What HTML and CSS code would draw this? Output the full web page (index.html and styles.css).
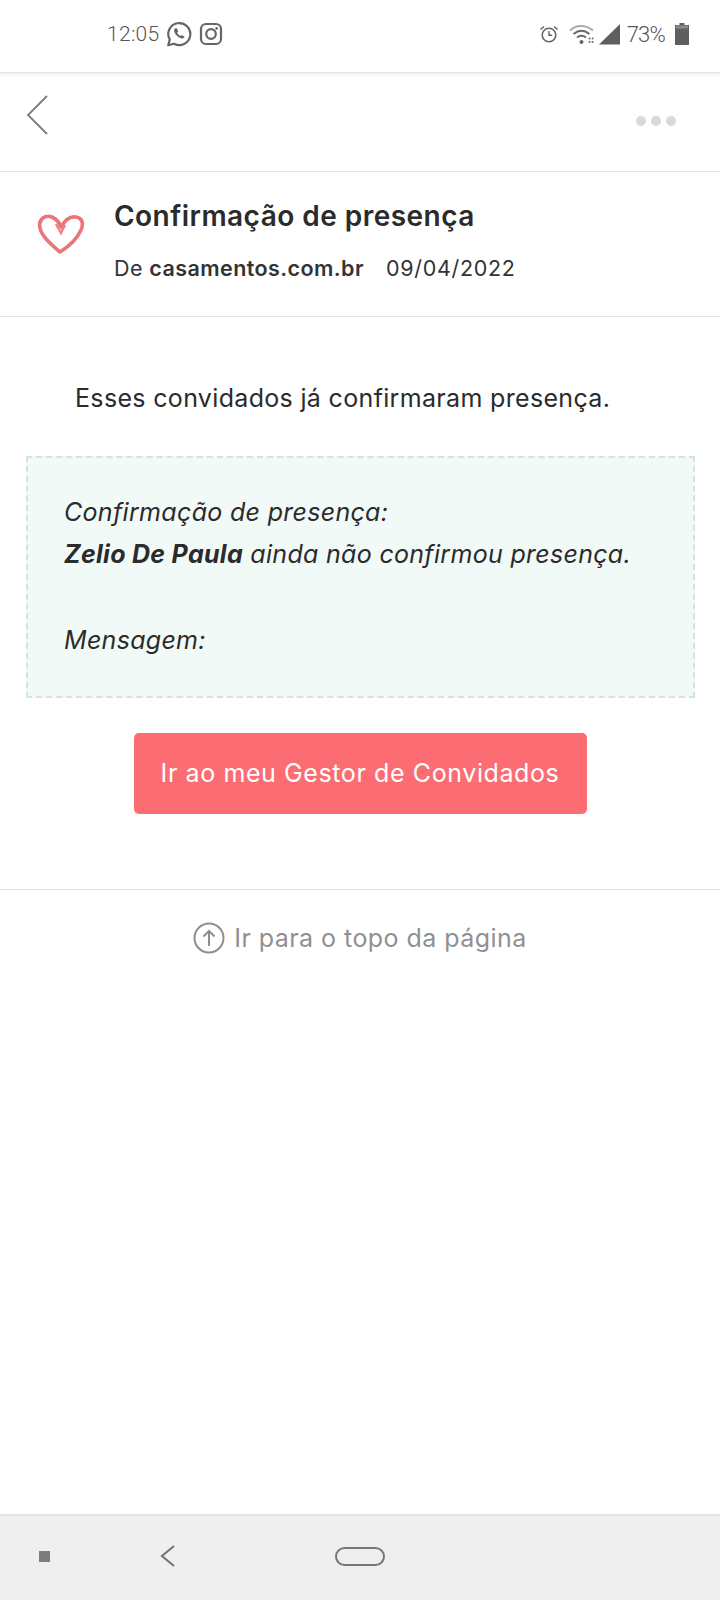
FILE: index.html
```html
<!DOCTYPE html>
<html lang="pt-BR">
<head>
<meta charset="utf-8">
<title>Confirmação de presença</title>
<link rel="stylesheet" href="styles.css">
</head>
<body>
<div class="phone">
  <header class="status">
    <div class="status-left">
      <span class="time">12:05</span>
      <svg class="ic-wa" viewBox="0 0 26 26" width="26" height="26"><path d="M2.200 24.200l1.600-5.600A11 11 0 1 1 8 22.700z" fill="none" stroke="#666" stroke-width="2.200" stroke-linejoin="round"/><path d="M9.200 7.200c-1.300 1-1.500 2.800-.4 4.800 1.300 2.400 3.200 4.200 5.600 5.100 1.800.7 3.400.2 4.200-1.200l-2.800-2-1.300 1.100c-1.300-.6-2.600-1.900-3.300-3.300l1.100-1.300-1.500-3.200z" fill="#666"/></svg>
      <svg class="ic-ig" viewBox="0 0 24 24" width="24" height="24"><rect x="2" y="2" width="20" height="20" rx="5" fill="none" stroke="#666" stroke-width="2.200"/><circle cx="12" cy="12" r="4.800" fill="none" stroke="#666" stroke-width="2.200"/><circle cx="17.600" cy="6.400" r="1.300" fill="#666"/></svg>
    </div>
    <div class="status-right">
      <svg viewBox="0 0 20 20" width="20" height="20"><circle cx="10" cy="11" r="6.800" fill="none" stroke="#666" stroke-width="1.600"/><path d="M10 7v4.300h3.200" fill="none" stroke="#666" stroke-width="1.400"/><path d="M1.500 5.500l3.500-3M18.500 5.500l-3.500-3" stroke="#666" stroke-width="1.600"/></svg>
      <svg class="ic-wifi" viewBox="0 0 26 22" width="26" height="22"><path d="M1 7.500C7 1.500 17 1.500 24 7.500" fill="none" stroke="#aaa" stroke-width="1.800"/><path d="M4.500 11c5-4 11-4 16 0" fill="none" stroke="#666" stroke-width="2"/><path d="M8 14.500c3-2.300 6-2.300 9 0" fill="none" stroke="#666" stroke-width="2"/><circle cx="12.500" cy="19" r="2" fill="#666"/><circle cx="20.500" cy="15.500" r="1" fill="#666"/><circle cx="23.500" cy="15.500" r="1" fill="#666"/><circle cx="20.500" cy="19" r="1" fill="#666"/><circle cx="23.500" cy="19" r="1" fill="#666"/></svg>
      <svg class="ic-signal" viewBox="0 0 21 21" width="21" height="21"><path d="M0 20.500L21 0v20.500z" fill="#5f5f5f"/></svg>
      <span class="pct">73%</span>
      <svg class="ic-batt" viewBox="0 0 14 22" width="14" height="22"><path d="M4.500 0h5v2h4.500v20H0V2h4.500z" fill="#5f5f5f"/><path d="M1 2.500h12v3H1z" fill="#8a8a8a"/></svg>
    </div>
  </header>
  <nav class="topbar">
    <svg class="back" viewBox="0 0 24 42" width="24" height="42"><path d="M22 2L3 21l19 19" fill="none" stroke="#7b7b7b" stroke-width="1.800"/></svg>
    <div class="dots"><i></i><i></i><i></i></div>
  </nav>
  <section class="head">
    <svg class="heart" viewBox="0 0 50 44" width="50" height="44"><path d="M24 15C20 5 11 2 6 6 1 10 2 17 6 23c4 6 11 12 17 17 8-5 17-13 21-22 3-7 1-12-5-13-6-1-11 3-15 10z" fill="none" stroke="#ea7478" stroke-width="3.600" stroke-linejoin="round"/><path d="M19 12l5 9 4-8" fill="none" stroke="#ee7f82" stroke-width="2.400"/></svg>
    <div class="head-text">
      <h1>Confirmação de presença</h1>
      <p class="meta"><span>De <b>casamentos.com.br</b></span><span class="date">09/04/2022</span></p>
    </div>
  </section>
  <main class="content">
    <p class="intro">Esses convidados já confirmaram presença.</p>
    <div class="note">
      <p>Confirmação de presença:</p>
      <p><b>Zelio De Paula</b> ainda não confirmou presença.</p>
      <p class="msg">Mensagem:</p>
    </div>
    <a class="cta">Ir ao meu Gestor de Convidados</a>
  </main>
  <footer class="totop">
    <svg viewBox="0 0 32 32" width="32" height="32"><circle cx="16" cy="16" r="14.500" fill="none" stroke="#8e8e8e" stroke-width="2"/><path d="M16 24V9M10.500 14.500L16 9l5.500 5.500" fill="none" stroke="#8e8e8e" stroke-width="2"/></svg>
    <span>Ir para o topo da página</span>
  </footer>
  <div class="navbar">
    <i class="square"></i>
    <svg class="nav-back" viewBox="0 0 18 24" width="18" height="24"><path d="M15 2L3 12l12 10" fill="none" stroke="#777" stroke-width="2.200"/></svg>
    <i class="pill"></i>
  </div>
</div>
</body>
</html>
```
FILE: styles.css
```css
* { box-sizing: border-box; }
html, body { margin: 0; padding: 0; }
body { background: #fff; font-family: "Inter", "Liberation Sans", sans-serif; color: #2b2b2b; }
.phone { width: 720px; height: 1600px; display: flex; flex-direction: column; overflow: hidden; }
.status { height: 73px; flex: none; display: flex; justify-content: space-between; align-items: center; padding: 0 31px 4px 107px; border-bottom: 1px solid #e6e6e6; box-shadow: 0 2px 3px rgba(0,0,0,.06); }
.status-left, .status-right { display: flex; align-items: center; }
.time { font: 300 21px "Roboto", sans-serif; color: #555; margin-right: 6px; letter-spacing: .3px; }
.ic-ig { margin-left: 7px; }
.status-right svg { flex: none; }
.ic-wifi { margin-left: 10px; }
.ic-signal { margin-left: 4px; }
.pct { font: 300 22px "Roboto", sans-serif; color: #555; margin: 0 10px 0 7px; letter-spacing: -.8px; }
.topbar { height: 99px; flex: none; display: flex; justify-content: space-between; align-items: center; padding: 0 44px 3px 25px; border-bottom: 1px solid #e3e3e3; }
.back { margin-top: -12px; }
.dots { display: flex; gap: 5px; }
.dots i { width: 10px; height: 10px; border-radius: 50%; background: #d9d9d9; }
.head { height: 145px; flex: none; display: flex; padding: 0 0 0 37px; border-bottom: 1px solid #e3e3e3; }
.heart { flex: none; margin-top: 40px; }
.head-text { margin-left: 27px; padding-top: 25px; }
h1 { margin: 0; font-size: 28px; line-height: 38px; font-weight: 600; letter-spacing: .47px; color: #2b2b2b; }
.meta { margin: 19px 0 0; font-size: 21.500px; line-height: 28px; display: flex; gap: 22px; color: #333; letter-spacing: .42px; }
.meta b { font-weight: 600; }
.date { letter-spacing: .7px; }
.content { flex: none; display: flex; flex-direction: column; align-items: center; height: 573px; border-bottom: 1px solid #e3e3e3; padding: 0 25px; }
.intro { margin: 63px 0 0; font-size: 25px; line-height: 36px; letter-spacing: .33px; width: 100%; padding-left: 50px; }
.note { margin-top: 40px; width: 669px; height: 242px; margin-left: 1px; background: #f2faf8; border: 2px dashed #d6e4e0; padding: 33px 36px 0; font-size: 25px; line-height: 42px; letter-spacing: .3px; font-style: italic; }
.note p { margin: 0; }
.note .msg { margin-top: 44px; }
.cta { margin-top: 35px; width: 453px; height: 81px; padding-bottom: 2px; border-radius: 5px; background: #fb6d72; color: #fff; font-size: 25px; letter-spacing: .6px; display: flex; align-items: center; justify-content: center; }
.totop { flex: none; height: 96px; display: flex; align-items: center; justify-content: center; gap: 9px; font-size: 25px; letter-spacing: .45px; color: #909090; }
.navbar { margin-top: auto; height: 86px; flex: none; background: #efefef; border-top: 2px solid #e2e2e2; display: flex; align-items: center; padding: 0 0 4px 39px; }
.square { width: 11px; height: 11px; background: #7d7d7d; }
.nav-back { margin-left: 109px; }
.pill { margin-left: 158px; width: 50px; height: 19px; border: 2.500px solid #777; border-radius: 10px; }
```
